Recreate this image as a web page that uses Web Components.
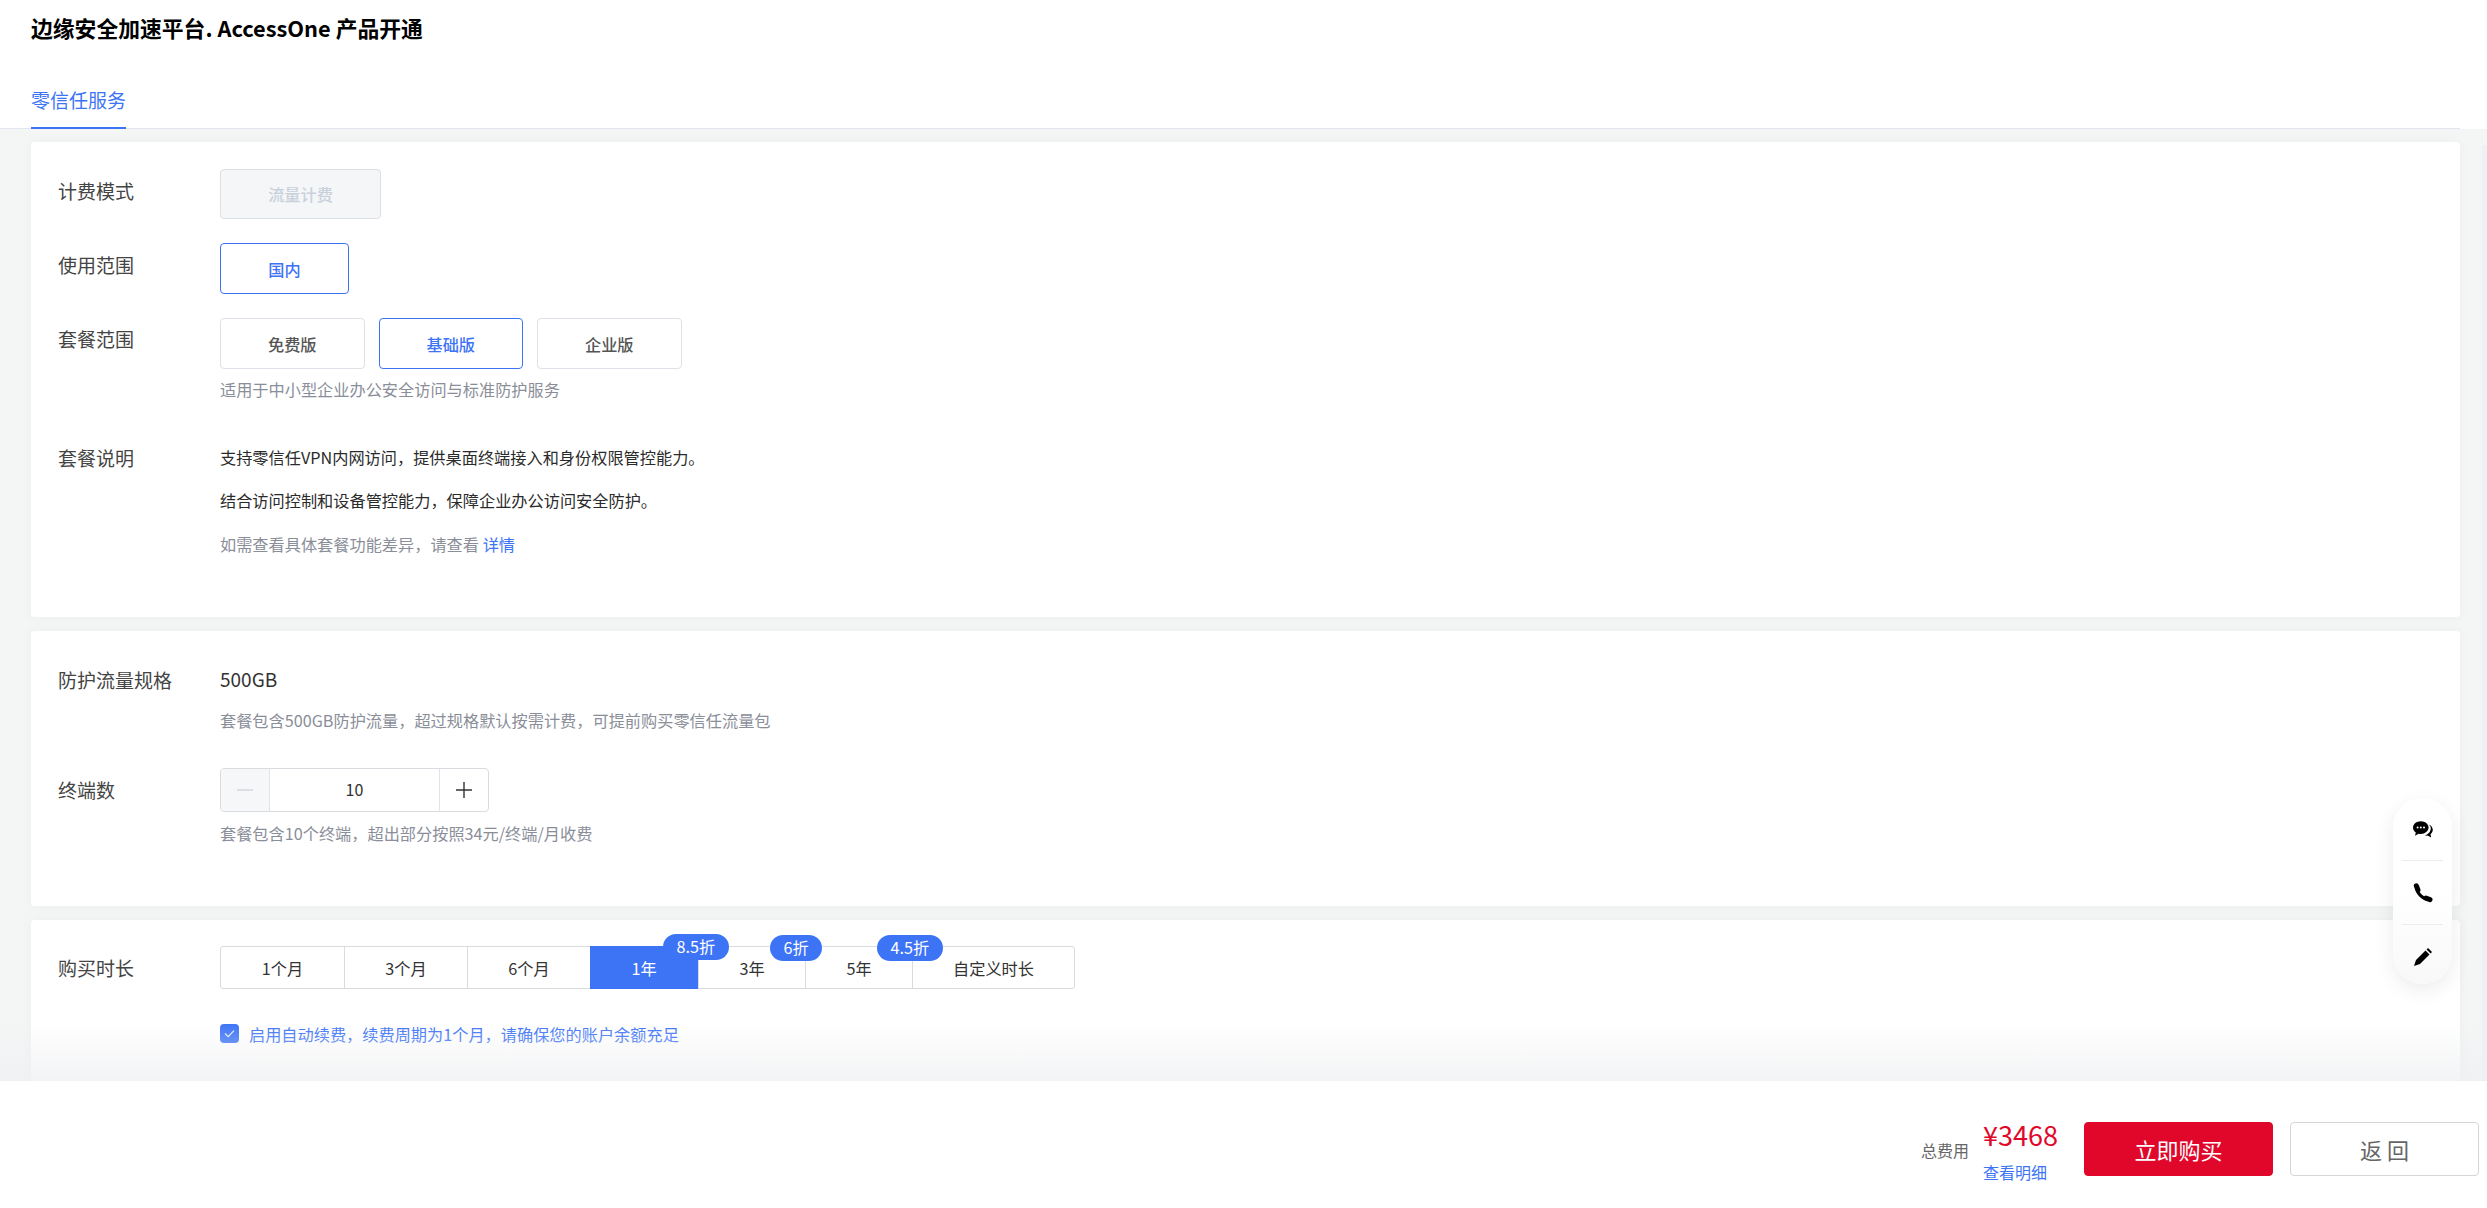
<!DOCTYPE html>
<html lang="zh">
<head>
<meta charset="utf-8">
<title>AccessOne 产品开通</title>
<style>
    html, body { margin: 0; height: 100%; }
    body {
        font-family: "Noto Sans CJK SC", "Noto Sans", sans-serif;
        color: #333;
        overflow: hidden;
    }
</style>
</head>
<body>
<app-page>
    <page-header slot="header" text="边缘安全加速平台. AccessOne 产品开通"></page-header>
    <tab-bar slot="tabs" text="零信任服务"></tab-bar>

    <form-card style="padding: 27px 0 61px">
        <form-row label="计费模式" style="--lh: 43px">
            <option-btn disabled style="width: 161px; height: 50px">流量计费</option-btn>
        </form-row>
        <form-row label="使用范围" style="--lh: 44px; margin-top: 24px">
            <option-btn active style="width: 129px">国内</option-btn>
        </form-row>
        <form-row label="套餐范围" style="--lh: 42px; margin-top: 24px">
            <div style="display: flex; gap: 14px">
                <option-btn>免费版</option-btn>
                <option-btn active>基础版</option-btn>
                <option-btn>企业版</option-btn>
            </div>
            <hint-text style="margin-top: 8px">适用于中小型企业办公安全访问与标准防护服务</hint-text>
        </form-row>
        <form-row label="套餐说明" style="--lh: 26px; margin-top: 44px">
            <hint-text dark>支持零信任VPN内网访问，提供桌面终端接入和身份权限管控能力。</hint-text>
            <hint-text dark style="margin-top: 19px">结合访问控制和设备管控能力，保障企业办公访问安全防护。</hint-text>
            <hint-text style="margin-top: 20px">如需查看具体套餐功能差异，请查看 <a style="color: #3d74f6">详情</a></hint-text>
        </form-row>
    </form-card>

    <form-card style="padding: 36px 0 61px">
        <form-row label="防护流量规格" style="--lh: 26px">
            <div style="font-size: 19px; line-height: 24px; color: #333">500GB</div>
            <hint-text style="margin-top: 17px">套餐包含500GB防护流量，超过规格默认按需计费，可提前购买零信任流量包</hint-text>
        </form-row>
        <form-row label="终端数" style="--lh: 44px; margin-top: 36px">
            <num-stepper value="10"></num-stepper>
            <hint-text style="margin-top: 9px">套餐包含10个终端，超出部分按照34元/终端/月收费</hint-text>
        </form-row>
    </form-card>

    <form-card last style="padding: 26px 0 0">
        <form-row label="购买时长" style="--lh: 44px">
            <duration-tabs>
                <duration-item style="--w: 124px">1个月</duration-item>
                <duration-item style="--w: 123px">3个月</duration-item>
                <duration-item style="--w: 123px">6个月</duration-item>
                <duration-item style="--w: 108px" active badge="8.5折">1年</duration-item>
                <duration-item style="--w: 107px" badge="6折">3年</duration-item>
                <duration-item style="--w: 107px" badge="4.5折">5年</duration-item>
                <duration-item style="--w: 163px">自定义时长</duration-item>
            </duration-tabs>
            <renew-check style="margin-top: 35px">启用自动续费，续费周期为1个月，请确保您的账户余额充足</renew-check>
        </form-row>
    </form-card>

    <buy-footer slot="footer" price="¥3468"></buy-footer>
</app-page>
<float-tools></float-tools>

<script>
customElements.define( 'app-page', class extends HTMLElement {

    constructor() {
        super();
        this.attachShadow({ mode: 'open' });
        this.shadowRoot.innerHTML = `
        <style>
            :host {
                display: flex;
                flex-direction: column;
                height: 100vh;
                background: #fff;
            }
            .main {
                flex: 1;
                min-height: 0;
                display: flex;
                background: #f4f6f6;
                overflow: hidden;
            }
            .cards {
                flex: 1;
                min-width: 0;
                display: flex;
                flex-direction: column;
                gap: 14px;
                padding: 13px 0 0 31px;
            }
            .gutter {
                width: 22px;
                flex: none;
            }
            .rail {
                width: 5px;
                flex: none;
                margin-top: 16px;
                background: #eff0f4;
            }
        </style>
        <slot name="header"></slot>
        <slot name="tabs"></slot>
        <div class="main">
            <div class="cards"><slot></slot></div>
            <div class="gutter"></div>
            <div class="rail"></div>
        </div>
        <slot name="footer"></slot>
        `;
    }
});

customElements.define( 'page-header', class extends HTMLElement {

    constructor() {
        super();
        this.attachShadow({ mode: 'open' });
        this.shadowRoot.innerHTML = `
        <style>
            :host {
                display: block;
                height: 72px;
                padding: 13px 0 0 31px;
                box-sizing: border-box;
                font-size: 21.8px;
                line-height: 30px;
                font-weight: 700;
                color: #000;
            }
        </style>
        ${ this.getAttribute( 'text' ) }
        `;
    }
});

customElements.define( 'tab-bar', class extends HTMLElement {

    constructor() {
        super();
        this.attachShadow({ mode: 'open' });
        this.shadowRoot.innerHTML = `
        <style>
            :host {
                display: block;
                height: 57px;
                box-sizing: border-box;
                padding-left: 31px;
                margin-right: 27px;
                border-bottom: 1px solid #e3e5ee;
            }
            .tab {
                display: inline-block;
                height: 57px;
                box-sizing: border-box;
                padding-top: 13px;
                font-size: 19px;
                line-height: 30px;
                color: #3d74f6;
                border-bottom: 2px solid #3d74f6;
            }
        </style>
        <div class="tab">${ this.getAttribute( 'text' ) }</div>
        `;
    }
});

customElements.define( 'form-card', class extends HTMLElement {

    constructor() {
        super();
        this.attachShadow({ mode: 'open' });
        this.shadowRoot.innerHTML = `
        <style>
            :host {
                display: block;
                flex: none;
                background: #fff;
                border-radius: 4px;
                box-shadow: 0 0 14px rgba(0, 0, 0, .035);
            }
            :host([last]) {
                flex: 1;
            }
        </style>
        <slot></slot>
        `;
    }
});

customElements.define( 'form-row', class extends HTMLElement {

    constructor() {
        super();
        this.attachShadow({ mode: 'open' });
        this.shadowRoot.innerHTML = `
        <style>
            :host {
                display: flex;
                padding-left: 27px;
            }
            .label {
                width: 162px;
                flex: none;
                font-size: 19px;
                line-height: var( --lh, 26px );
                color: #444;
            }
            .body {
                flex: 1;
                min-width: 0;
            }
        </style>
        <div class="label">${ this.getAttribute( 'label' ) }</div>
        <div class="body"><slot></slot></div>
        `;
    }
});

customElements.define( 'option-btn', class extends HTMLElement {

    constructor() {
        super();
        this.attachShadow({ mode: 'open' });
        this.shadowRoot.innerHTML = `
        <style>
            :host {
                display: flex;
                align-items: center;
                justify-content: center;
                width: 144.5px;
                height: 51px;
                box-sizing: border-box;
                border: 1px solid #dfe1e8;
                border-radius: 4px;
                background: #fff;
                font-size: 16.2px;
                font-weight: 500;
                color: #555;
            }
            :host([active]) {
                border-color: #3d74f6;
                color: #3d74f6;
            }
            :host([disabled]) {
                background: #f5f6f8;
                border-color: #dcdfe3;
                color: #c9d1dc;
            }
        </style>
        <slot></slot>
        `;
    }
});

customElements.define( 'hint-text', class extends HTMLElement {

    constructor() {
        super();
        this.attachShadow({ mode: 'open' });
        this.shadowRoot.innerHTML = `
        <style>
            :host {
                display: block;
                font-size: 16.2px;
                line-height: 24px;
                color: #8a8e99;
            }
            :host([dark]) {
                color: #2b2b2b;
            }
        </style>
        <slot></slot>
        `;
    }
});

customElements.define( 'num-stepper', class extends HTMLElement {

    constructor() {
        super();
        this.attachShadow({ mode: 'open' });
        this.shadowRoot.innerHTML = `
        <style>
            :host {
                display: flex;
                width: 269px;
                height: 44px;
                box-sizing: border-box;
                border: 1px solid #d9dbe0;
                border-radius: 4px;
                overflow: hidden;
                color: #333;
            }
            .side {
                width: 48px;
                flex: none;
                display: flex;
                align-items: center;
                justify-content: center;
            }
            .minus {
                background: #f6f7f9;
                border-right: 1px solid #e2e4e8;
            }
            .plus {
                border-left: 1px solid #e2e4e8;
            }
            .value {
                flex: 1;
                text-align: center;
                font-size: 16px;
                line-height: 40px;
            }
            svg {
                width: 16px;
                height: 16px;
                display: block;
            }
        </style>
        <div class="side minus">
            <svg viewBox="0 0 16 16"><path d="M0 8H16" stroke="#d3d6dc" stroke-width="1.4" fill="none" /></svg>
        </div>
        <div class="value">${ this.getAttribute( 'value' ) }</div>
        <div class="side plus">
            <svg viewBox="0 0 16 16"><path d="M0 8H16M8 0V16" stroke="#333" stroke-width="1.4" fill="none" /></svg>
        </div>
        `;
    }
});

customElements.define( 'duration-tabs', class extends HTMLElement {

    constructor() {
        super();
        this.attachShadow({ mode: 'open' });
        this.shadowRoot.innerHTML = `
        <style>
            :host {
                display: flex;
                width: max-content;
                height: 43px;
                box-sizing: border-box;
                border: 1px solid #dadbdd;
                border-radius: 3px;
            }
        </style>
        <slot></slot>
        `;
    }
});

customElements.define( 'duration-item', class extends HTMLElement {

    constructor() {
        super();
        this.attachShadow({ mode: 'open' });
        const badge = this.getAttribute( 'badge' );
        this.shadowRoot.innerHTML = `
        <style>
            :host {
                display: flex;
                align-items: center;
                justify-content: center;
                position: relative;
                width: var( --w );
                box-sizing: border-box;
                border-left: 1px solid #dadbdd;
                font-size: 16.2px;
                color: #333;
            }
            :host(:first-child) {
                border-left: none;
                width: calc( var( --w ) - 1px );
            }
            :host(:last-child) {
                width: calc( var( --w ) - 1px );
            }
            :host([active]) {
                background: #3d74f6;
                color: #fff;
                border-left: none;
                margin: -1px 0;
            }
            .badge {
                position: absolute;
                left: calc( 100% - 35px );
                top: -12px;
                height: 26px;
                padding: 0 13.5px;
                border-radius: 13px;
                background: #3d74f6;
                color: #fff;
                font-size: 16.2px;
                line-height: 25px;
                white-space: nowrap;
                z-index: 1;
            }
        </style>
        <slot></slot>
        ${ badge ? `<span class="badge">${ badge }</span>` : '' }
        `;
    }
});

customElements.define( 'renew-check', class extends HTMLElement {

    constructor() {
        super();
        this.attachShadow({ mode: 'open' });
        this.shadowRoot.innerHTML = `
        <style>
            :host {
                display: flex;
                align-items: center;
                gap: 10px;
                height: 19px;
                font-size: 16.2px;
                color: #3d74f6;
            }
            svg {
                width: 19px;
                height: 19px;
                display: block;
            }
        </style>
        <svg viewBox="0 0 19 19">
            <rect width="19" height="19" rx="4" fill="#3d74f6" />
            <path d="M5 9.500L8.200 12.600L14 6.600" stroke="#e6edff" stroke-width="1.200" fill="none" />
        </svg>
        <span><slot></slot></span>
        `;
    }
});

customElements.define( 'buy-footer', class extends HTMLElement {

    constructor() {
        super();
        this.attachShadow({ mode: 'open' });
        this.shadowRoot.innerHTML = `
        <style>
            :host {
                display: flex;
                justify-content: flex-end;
                position: relative;
                height: 127px;
                flex: none;
                box-sizing: border-box;
                padding: 36px 8px 0 0;
                background: #fff;
            }
            .fade {
                position: absolute;
                left: 0;
                right: 0;
                bottom: 100%;
                height: 58px;
                background: linear-gradient( rgba(238, 239, 241, 0), rgba(238, 239, 241, .72) );
                pointer-events: none;
            }
            .total {
                margin: 21px 14px 0 0;
                font-size: 16px;
                line-height: 24px;
                color: #666;
            }
            .price {
                width: 101px;
            }
            .amount {
                font-size: 27px;
                line-height: 36px;
                color: #e1072b;
            }
            .detail {
                margin-top: 8px;
                font-size: 16px;
                line-height: 22px;
                color: #3d74f6;
            }
            .btn {
                width: 189px;
                height: 54px;
                box-sizing: border-box;
                margin-top: 5px;
                border-radius: 4px;
                text-align: center;
                font-size: 22px;
                line-height: 52px;
            }
            .buy {
                background: #e1072b;
                color: #fff;
                border: 1px solid #e1072b;
            }
            .back {
                margin-left: 17px;
                border: 1px solid #d6d6d6;
                color: #666;
            }
        </style>
        <div class="fade"></div>
        <div class="total">总费用</div>
        <div class="price">
            <div class="amount">${ this.getAttribute( 'price' ) }</div>
            <div class="detail">查看明细</div>
        </div>
        <div class="btn buy">立即购买</div>
        <div class="btn back">返 回</div>
        `;
    }
});

customElements.define( 'float-tools', class extends HTMLElement {

    constructor() {
        super();
        this.attachShadow({ mode: 'open' });
        this.shadowRoot.innerHTML = `
        <style>
            :host {
                display: flex;
                flex-direction: column;
                position: fixed;
                top: 798px;
                right: 35px;
                width: 59px;
                height: 186px;
                border-radius: 30px;
                background: linear-gradient( #fff, #fff 50%, #f8f8f8 );
                box-shadow: 0 6px 20px rgba(0, 0, 0, .08);
            }
            .tool {
                display: flex;
                align-items: center;
                justify-content: center;
                box-sizing: border-box;
            }
            .chat {
                height: 62px;
            }
            .call {
                height: 64px;
                margin: 0 9px;
                border-top: 1px solid #ececec;
            }
            .edit {
                height: 60px;
                margin: 0 9px;
                padding-top: 4px;
                border-top: 1px solid #ececec;
            }
            svg {
                width: 20px;
                height: 20px;
                display: block;
            }
        </style>
        <div class="tool chat">
            <svg viewBox="0 0 20 20">
                <path d="M15.600 5.400C18 6.300 19.800 8.300 19.800 10.800c0 1.800-.9 3.400-2.300 4.500l.7 3.200-3.700-2c-.9.2-1.800.2-2.700 0 3.500-1.200 6-3.900 6-7.200 0-1.500-.8-3-2.200-3.900z" fill="#000" />
                <path d="M7.800 2.200C3.500 2.200 0 5 0 8.600c0 2 1 3.800 2.800 5l-.8 3.200 3.700-2c.7.2 1.400.2 2.100.2 4.300 0 7.800-2.800 7.800-6.400S12.100 2.200 7.800 2.200z" fill="#000" />
                <circle cx="4.600" cy="8.600" r="1" fill="#fff" />
                <circle cx="7.800" cy="8.600" r="1" fill="#fff" />
                <circle cx="11" cy="8.600" r="1" fill="#fff" />
            </svg>
        </div>
        <div class="tool call">
            <svg viewBox="0 0 20 20">
                <path d="M3.500 3.500C3.500 10 9.500 16.500 16.500 16.500" stroke="#000" stroke-width="3.200" fill="none" />
                <path d="M3.300 2.800L5 7" stroke="#000" stroke-width="5" stroke-linecap="round" />
                <path d="M13 15.200L17 16.700" stroke="#000" stroke-width="5" stroke-linecap="round" />
            </svg>
        </div>
        <div class="tool edit">
            <svg viewBox="0 0 20 20">
                <path d="M1 19L3 13L12.500 3.500L16.500 7.500L7 17Z" fill="#000" />
                <path d="M13.600 2.400L15 1L19 5L17.600 6.400Z" fill="#000" />
            </svg>
        </div>
        `;
    }
});
</script>
</body>
</html>
